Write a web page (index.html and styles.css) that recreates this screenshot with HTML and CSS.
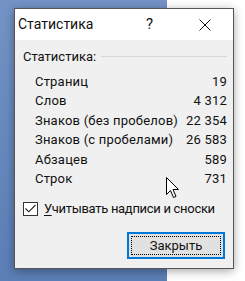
FILE: index.html
```html
<!doctype html>
<html lang="ru">
<head>
  <meta charset="utf-8" />
  <title>Статистика</title>
  <link rel="stylesheet" href="styles.css">
</head>
<body>
  <div class="desktop"></div>

  <div class="dialog">
    <div class="titlebar">
      <span class="title">Статистика</span>
      <span class="help">?</span>
      <span class="close">
        <svg width="12" height="12" viewBox="0 0 12 12">
          <path d="M0.5 0.5 L11.5 11.5 M11.5 0.5 L0.5 11.5" stroke="#111" stroke-width="1" fill="none" />
        </svg>
      </span>
    </div>

    <div class="content">
      <div class="group-head">
        <span>Статистика:</span>
        <span class="rule"></span>
      </div>

      <div class="stats">
        <div class="row"><span>Страниц</span><span>19</span></div>
        <div class="row"><span>Слов</span><span>4 312</span></div>
        <div class="row"><span>Знаков (без пробелов)</span><span>22 354</span></div>
        <div class="row"><span>Знаков (с пробелами)</span><span>26 583</span></div>
        <div class="row"><span>Абзацев</span><span>589</span></div>
        <div class="row"><span>Строк</span><span>731</span></div>
      </div>

      <label class="check">
        <span class="box">
          <svg width="13" height="13" viewBox="0 0 13 13">
            <path d="M1.5 6.5 L4.8 9.8 L11.5 3" stroke="#222" stroke-width="1.1" fill="none" />
          </svg>
        </span>
        <span class="check-text"><u>У</u>читывать надписи и сноски</span>
      </label>

      <div class="actions">
        <button class="btn">Закрыть</button>
      </div>
    </div>
  </div>

  <svg class="cursor" width="14" height="22" viewBox="0 0 14 22">
    <path d="M0.5 0.5 L0.5 17.5 L4.5 13.5 L7.5 20.5 L10 19.5 L7 12.5 L12.5 12.5 Z" fill="#fff" stroke="#000" stroke-width="1" />
  </svg>
</body>
</html>
```

FILE: styles.css
```css
* {
  box-sizing: border-box;
}

html,
body {
  margin: 0;
  padding: 0;
  height: 100%;
}

body {
  background: #fff;
  font-family: Roboto, "Noto Sans", sans-serif;
  font-size: 13px;
  color: #111;
  position: relative;
  overflow: hidden;
  white-space: nowrap;
}

.desktop {
  position: absolute;
  top: 0;
  left: 0;
  bottom: 0;
  width: 167px;
  background: linear-gradient(180deg, #7493c6, #5a7eb6);
}

.dialog {
  position: absolute;
  top: 8px;
  left: 14px;
  width: 220px;
  height: 261px;
  border: 1px solid #555;
  background: #f0f0f0;
  box-shadow: 0 2px 9px rgba(0, 0, 0, 0.35);
  display: flex;
  flex-direction: column;
}

.titlebar {
  height: 31px;
  background: #fff;
  display: flex;
  align-items: center;
  padding-left: 3px;
  line-height: 31px;
}

.title {
  font-size: 14px;
  flex: 1;
}

.help {
  width: 53px;
  font-size: 15px;
}

.close {
  width: 34px;
  display: flex;
  align-items: center;
}

.close svg {
  display: block;
}

.content {
  flex: 1;
  padding: 7px 6px 0 8px;
  line-height: 19.4px;
  display: flex;
  flex-direction: column;
}

.group-head {
  display: flex;
  align-items: center;
  gap: 5px;
  margin-bottom: 5.6px;
}

.rule {
  flex: 1;
  height: 1px;
  background: #d7d7d7;
}

.stats {
  padding-left: 12px;
  letter-spacing: 0.2px;
}

.row {
  display: flex;
  justify-content: space-between;
}

.check {
  display: flex;
  align-items: center;
  gap: 6px;
  margin-top: 10.5px;
}

.check-text {
  letter-spacing: -0.3px;
}

.box {
  width: 15px;
  height: 14px;
  border: 1px solid #333;
  background: #fff;
  display: flex;
  align-items: center;
  justify-content: center;
}

.box svg {
  display: block;
}

.check u {
  text-decoration-thickness: 1px;
  text-underline-offset: 2px;
}

.actions {
  display: flex;
  justify-content: flex-end;
  margin-top: 13.7px;
  padding-right: 2px;
}

.btn {
  width: 98px;
  height: 27px;
  border: 2px solid #0078d7;
  background: #e1e1e1;
  font: inherit;
  color: #111;
  padding: 0;
  outline: 1px dotted #000;
  outline-offset: -5px;
}

.cursor {
  position: absolute;
  left: 166px;
  top: 177px;
}
```
